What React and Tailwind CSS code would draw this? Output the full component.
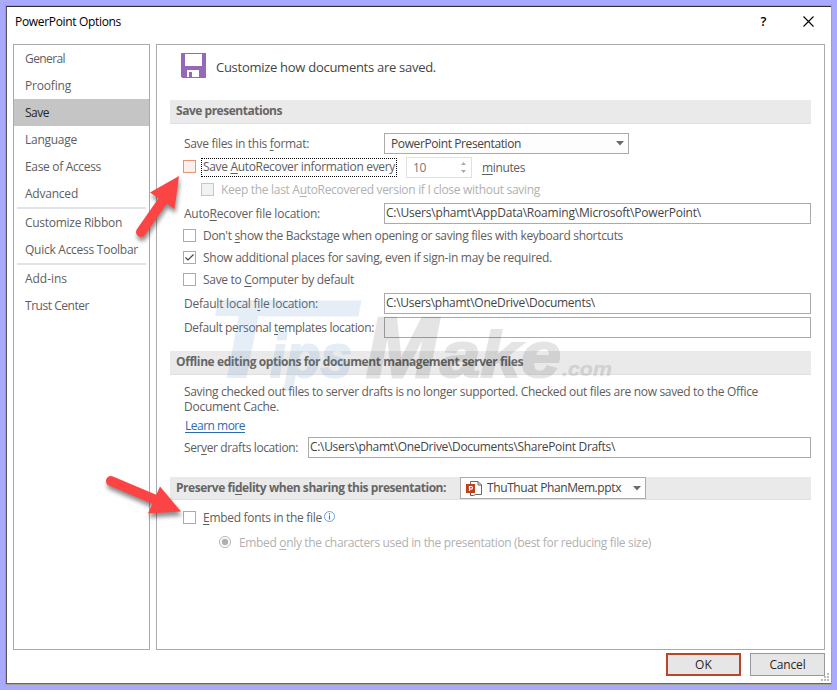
import { useLayoutEffect, useRef, useState } from 'react';

// single line of text, tracked so that it fills w pixels
function Label({ w, className = '', children }) {
  const ref = useRef(null);
  const [spacing, setSpacing] = useState(0);

  useLayoutEffect(() => {
    const el = ref.current;
    const natural = el.getBoundingClientRect().width;
    setSpacing((w - natural) / el.textContent.length);
  }, [w]);

  return (
    <span
      ref={ref}
      className={`inline-block shrink-0 whitespace-nowrap underline-offset-2 ${className}`}
      style={{ letterSpacing: `${spacing}px` }}
    >
      {children}
    </span>
  );
}

function NavItem({ w, active, children }) {
  return (
    <div className={`h-[27px] pl-[11px] flex items-center ${active ? 'bg-[#c5c5c5] text-[#262626]' : 'text-[#5e5e5e]'}`}>
      <Label w={w}>{children}</Label>
    </div>
  );
}

function NavLine() {
  return <div className="h-0.5 mx-[3px] bg-[#e2e3e6]" />;
}

function SectionBar({ className = '', children }) {
  return (
    <div className={`ml-[13px] w-[641px] pl-1.5 flex items-center bg-[#eaeaea] border-b border-[#e0e0e0] font-bold text-[#666666] ${className}`}>
      {children}
    </div>
  );
}

function Checkbox({ checked, className = 'border-[#ababab] bg-white' }) {
  return (
    <div className={`w-[13px] h-[13px] shrink-0 border ${className}`}>
      {checked && (
        <svg width="11" height="11" viewBox="0 0 11 11" fill="none">
          <path d="M1.5 5.5 4 8l5.5-5.5" stroke="#444" strokeWidth="1.2" />
        </svg>
      )}
    </div>
  );
}

function CheckRow({ w, checked, className = '', children }) {
  return (
    <div className={`h-[13px] pl-[26px] flex items-center gap-[7px] ${className}`}>
      <Checkbox checked={checked} />
      <Label w={w}>{children}</Label>
    </div>
  );
}

function PathRow({ label, labelBox = 'w-[200px]', className = '', children }) {
  return (
    <div className={`h-[21px] pl-[27px] pr-[13px] flex items-center ${className}`}>
      <div className={`shrink-0 h-[15px] flex ${labelBox}`}>{label}</div>
      <div className="flex-1 h-[21px] pl-px pb-0.5 border border-[#ababab] bg-white text-[#444444] flex items-center">
        {children}
      </div>
    </div>
  );
}

function Caret() {
  return (
    <svg width="8" height="5" viewBox="0 0 8 5" className="shrink-0">
      <path d="M0 0h8L4 4.5z" fill="#6a6a6a" />
    </svg>
  );
}

function Watermark() {
  return (
    <svg
      className="absolute left-[210px] top-[290px] pointer-events-none"
      width="420"
      height="110"
      viewBox="210 290 420 110"
      fontFamily="Liberation Sans, sans-serif"
      fontWeight="bold"
      fontStyle="italic"
    >
      <g fill="#5590cc" stroke="#5590cc" opacity="0.15">
        <text x="210" y="376" fontSize="107" strokeWidth="4">T</text>
        <path d="M262 301h99l-3 15h-96z" />
        <text x="270" y="377" fontSize="62" strokeWidth="2" textLength="82" lengthAdjust="spacingAndGlyphs">ips</text>
      </g>
      <g fill="#000" stroke="#000" opacity="0.1">
        <text x="366" y="377" fontSize="86" strokeWidth="3">M</text>
        <text x="440" y="377" fontSize="64" strokeWidth="2" textLength="121" lengthAdjust="spacingAndGlyphs">ake</text>
        <text x="562" y="376" fontSize="21" strokeWidth="0.5" textLength="50" lengthAdjust="spacingAndGlyphs">.com</text>
      </g>
    </svg>
  );
}

function Arrows() {
  return (
    <svg
      className="absolute left-[90px] top-[160px] pointer-events-none"
      style={{ filter: 'drop-shadow(1px 4px 2px rgba(0,0,0,0.45))' }}
      width="110"
      height="370"
      viewBox="90 160 110 370"
      fill="#fd4444"
      stroke="#fd4444"
      strokeLinecap="round"
    >
      <path d="M141 232 164 199" strokeWidth="10" />
      <path d="M179 176 150 192.500 174.500 209z" stroke="none" />
      <path d="M111 481 156 500" strokeWidth="10" />
      <path d="M181 511.500 160 486.500 148 513.500z" stroke="none" />
    </svg>
  );
}

export default function App() {
  return (
    <div className="relative w-[837px] h-[690px] p-[5px] overflow-hidden bg-[#a9a9ff] font-['Open_Sans','Noto_Sans',sans-serif] text-[12px] leading-[15px] text-[#5e5e5e]">
      <div className="w-[827px] h-[680px] border border-[#a0a0a0]">
        <div className="w-[825px] h-[678px] border-t border-l border-b border-t-[#2c2c34] border-l-[#555] border-b-[#666] bg-white flex flex-col">
          <div className="h-[37px] shrink-0 pl-2 pr-[11px] flex items-start justify-between text-black">
            <Label w={106} className="mt-[7px]">PowerPoint Options</Label>
            <div className="flex items-start">
              <span className="mt-[7px] mr-[35px] w-[9px] font-semibold text-[13px] text-center">?</span>
              <svg className="mt-[9px] mr-[6px]" width="11" height="11" viewBox="0 0 11 11" fill="none">
                <path d="M.5.500l10 10M10.500.500l-10 10" stroke="#000" strokeWidth="1.1" />
              </svg>
            </div>
          </div>

          <div className="h-[606px] shrink-0 pl-1.5 flex gap-1.5">
            <nav className="w-[137px] shrink-0 border border-[#ababab]">
              <NavItem w={40}>General</NavItem>
              <NavItem w={46}>Proofing</NavItem>
              <NavItem w={24} active>Save</NavItem>
              <NavItem w={52}>Language</NavItem>
              <NavItem w={76}>Ease of Access</NavItem>
              <NavItem w={53}>Advanced</NavItem>
              <NavLine />
              <NavItem w={97}>Customize Ribbon</NavItem>
              <NavItem w={113}>Quick Access Toolbar</NavItem>
              <NavLine />
              <NavItem w={42}>Add-ins</NavItem>
              <NavItem w={64}>Trust Center</NavItem>
            </nav>

            <main className="w-[669px] shrink-0 border border-[#ababab] flex flex-col">
              <div className="h-[55px] shrink-0 pl-6 pt-2 flex items-start gap-2.5">
                <svg width="25" height="25" viewBox="0 0 25 25">
                  <path d="M0 0h25v25H1.500L0 23.500z" fill="#9668b8" />
                  <path d="M4 1h17v12H4zM6 17h12v7h-7v-5H8v5H6z" fill="#fff" />
                </svg>
                <Label w={220} className="mt-[7px] text-[13px] text-[#444444]">Customize how documents are saved.</Label>
              </div>

              <SectionBar className="h-6 pb-0.5"><Label w={106}>Save presentations</Label></SectionBar>

              <div className="mt-[9px] h-[21px] pl-[27px] flex items-center">
                <div className="w-[200px] h-[15px] flex"><Label w={125}>Save files in this <u>f</u>ormat:</Label></div>
                <div className="w-[245px] h-[21px] pl-1.5 pr-1 border border-[#ababab] bg-[#fdfdfd] text-[#444444] flex items-center justify-between">
                  <Label w={130}>PowerPoint Presentation</Label>
                  <Caret />
                </div>
              </div>

              <div className="mt-[3px] h-[21px] pl-[26px] flex items-start">
                <Checkbox className="mt-[3px] border-[#e8917b] bg-[#fdf0ec]" />
                <div className="mt-px ml-[5px] w-[196px] h-[19px] pl-px pb-0.5 border border-dotted border-black flex items-center">
                  <Label w={192}>Save <u>A</u>utoRecover information every</Label>
                </div>
                <div className="ml-[9px] w-[66px] h-[21px] pl-1.5 pr-1 border border-[#e1e1e1] text-[#777777] flex items-center justify-between">
                  <Label w={13}>10</Label>
                  <svg width="7" height="13" viewBox="0 0 7 13" fill="#ababab">
                    <path d="M1 4h5L3.500 1zM1 9h5L3.500 12z" />
                  </svg>
                </div>
                <Label w={43} className="ml-2.5 mt-[3px]"><u>m</u>inutes</Label>
              </div>

              <div className="mt-[5px] h-[13px] pl-11 flex items-center gap-[7px] text-[#b1b1b1]">
                <Checkbox className="border-[#c6c6c6] bg-[#f2f2f2]" />
                <Label w={319}>Keep the last A<u>u</u>toRecovered version if I close without saving</Label>
              </div>

              <PathRow className="mt-[7px]" label={<Label w={136}>Auto<u>R</u>ecover file location:</Label>}>
                <Label w={315}>C:\Users\phamt\AppData\Roaming\Microsoft\PowerPoint\</Label>
              </PathRow>

              <CheckRow className="mt-[5px]" w={420}>Don't <u>s</u>how the Backstage when opening or saving files with keyboard shortcuts</CheckRow>
              <CheckRow className="mt-[9px]" w={349} checked>Show additional places for saving, even if sign-in may be required.</CheckRow>
              <CheckRow className="mt-[9px]" w={151}>Save to <u>C</u>omputer by default</CheckRow>

              <PathRow className="mt-[7px]" label={<Label w={134}>Default local f<u>i</u>le location:</Label>}>
                <Label w={209}>C:\Users\phamt\OneDrive\Documents\</Label>
              </PathRow>
              <PathRow className="mt-[3px]" label={<Label w={190}>Default personal <u>t</u>emplates location:</Label>} />

              <SectionBar className="mt-[13px] h-6 pb-0.5">
                <Label w={347}>Offline editing options for document management server files</Label>
              </SectionBar>

              <div className="mt-[9px] pl-[27px] flex flex-col items-start">
                <Label w={574}>Saving checked out files to server drafts is no longer supported. Checked out files are now saved to the Office</Label>
                <Label w={95}>Document Cache.</Label>
                <Label w={60} className="mt-1 ml-px underline text-[#2b6cb0]">Learn more</Label>
              </div>

              <PathRow className="mt-1" labelBox="w-[124px]" label={<Label w={114}>Ser<u>v</u>er drafts location:</Label>}>
                <Label w={305}>C:\Users\phamt\OneDrive\Documents\SharePoint Drafts\</Label>
              </PathRow>

              <SectionBar className="mt-[19px] h-[23px]">
                <Label w={270} className="mb-px">Preserve fi<u>d</u>elity when sharing this presentation:</Label>
                <div className="ml-3.5 w-[186px] h-[22px] pl-[5px] pr-1 border border-[#ababab] bg-[#fdfdfd] font-normal text-[#444444] flex items-center">
                  <svg width="17" height="17" viewBox="0 0 17 17" fill="none">
                    <path d="M4.500 4V1.500h7M4.500 13v2.500h3l2-1h6V5l-3.500-3.500H11.500M12 1.500V5h3.500" stroke="#666" />
                    <path d="M0 4h9v9H0z" fill="#c43e1c" />
                    <path d="M3.500 11V6.500h1.700a1.200 1.200 0 0 1 0 2.600H3.500" stroke="#fff" strokeWidth="1.2" />
                  </svg>
                  <Label w={134} className="ml-1 mr-auto mb-px">ThuThuat PhanMem.pptx</Label>
                  <Caret />
                </div>
              </SectionBar>

              <div className="mt-[11px] h-[13px] pl-[26px] flex items-center">
                <Checkbox />
                <Label w={119} className="ml-[7px]"><u>E</u>mbed fonts in the file</Label>
                <svg className="ml-[2px] mb-[2px]" width="11" height="11" viewBox="0 0 11 11" fill="none">
                  <circle cx="5.5" cy="5.5" r="5" stroke="#6f9fdc" />
                  <path d="M5.500 4.500v4M5.500 2.300v1.200" stroke="#4b6fa8" strokeWidth="1.1" />
                </svg>
              </div>

              <div className="mt-3 h-[13px] pl-[62px] flex items-center gap-2 text-[#b1b1b1]">
                <svg width="12" height="13" viewBox="0 0 12 13" fill="none">
                  <circle cx="6" cy="6" r="5.500" stroke="#b4b4b4" />
                  <circle cx="6" cy="6" r="3.200" fill="#b1b1b1" />
                </svg>
                <Label w={412}>Embed <u>o</u>nly the characters used in the presentation (best for reducing file size)</Label>
              </div>
            </main>
          </div>

          <div className="pt-[3px] pr-1.5 flex justify-end gap-[9px] text-[#262626]">
            <button className="w-[75px] h-[23px] border-2 border-[#b7472a] bg-[#e6e6e6] flex items-center justify-center">
              <Label w={17}>OK</Label>
            </button>
            <button className="w-[75px] h-[23px] border border-[#999999] bg-[#e6e6e6] flex items-center justify-center">
              <Label w={36}>Cancel</Label>
            </button>
          </div>
        </div>
      </div>

      <svg className="absolute left-[821px] top-[673px]" width="8" height="8" viewBox="0 0 8 8" fill="#bcbcbc">
        <path d="M6 0h2v2H6zM3 3h2v2H3zM6 3h2v2H6zM0 6h2v2H0zM3 6h2v2H3zM6 6h2v2H6z" />
      </svg>
      <Watermark />
      <Arrows />
    </div>
  );
}
